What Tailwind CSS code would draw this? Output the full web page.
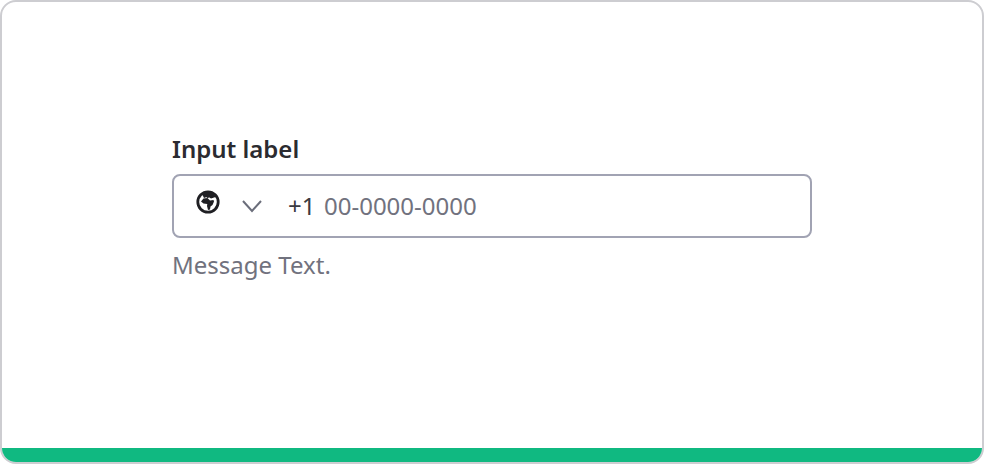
<!DOCTYPE html>
<html>
<head>
<meta charset="utf-8">
<script src="https://cdn.jsdelivr.net/npm/@tailwindcss/browser@4"></script>
</head>
<body class="bg-white">
<div class="w-[984px] h-[464px] flex flex-col overflow-hidden rounded-[16px] border-2 border-[#cdcdd1] bg-white font-['Noto_Sans',sans-serif]">
  <div class="flex-1 flex flex-col pl-[170px] pt-[131px]">
    <div class="w-[640px]">
      <div class="text-[24px] leading-[32px] font-semibold text-[#2b2b30]">Input label</div>
      <div class="mt-[9px] h-[64px] rounded-[8px] border-2 border-[#a1a3b3] flex items-center pl-[22px]">
        <svg class="w-[24px] h-[24px] mb-[8px]" viewBox="0 0 24 24"><circle cx="12" cy="12" r="10.2" fill="none" stroke="#1f1f23" stroke-width="2.8"/><path fill="#1f1f23" d="M6 4 12 2l6 2 1.500 3-4.500 1.500-1.500-1-2.500.5-.5-1-2.500 1z"/><path fill="#1f1f23" d="M5 11.500 7.500 8.500l4-.5 1.500 1.500 1 1 3.500-.5.5 1.500-1.500 3.500-2 1.500-.5 3-2 .5-1-4 .3-2-3.800-.5z"/></svg>
        <svg class="w-[24px] h-[24px] ml-[20px]" viewBox="0 0 24 24"><path d="M3 7l9 10 9-10" fill="none" stroke="#6b6e7b" stroke-width="2"/></svg>
        <span class="ml-[24px] text-[24px] text-[#3a3a40]">+1</span>
        <span class="ml-[8.500px] text-[24px] text-[#71727e]">00-0000-0000</span>
      </div>
      <div class="mt-[11px] text-[24px] leading-[32px] text-[#71727e]">Message Text.</div>
    </div>
  </div>
  <div class="h-[14px] bg-[#10b981]"></div>
</div>
</body>
</html>
